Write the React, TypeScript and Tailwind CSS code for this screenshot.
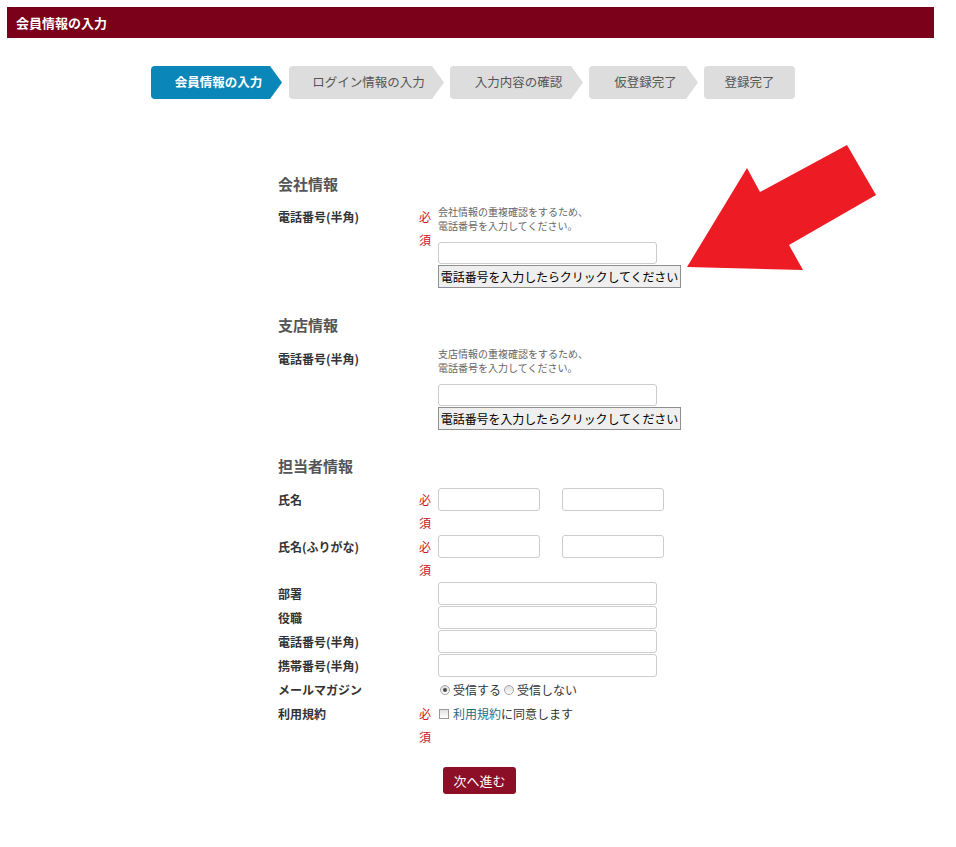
import React from "react";

const steps = [
  { label: "会員情報の入力", w: 131, active: true, arrow: true },
  { label: "ログイン情報の入力", w: 155, active: false, arrow: true },
  { label: "入力内容の確認", w: 133, active: false, arrow: true },
  { label: "仮登録完了", w: 109, active: false, arrow: true },
  { label: "登録完了", w: 91, active: false, arrow: false },
];

function Req() {
  return (
    <div className="w-[19px] shrink-0 flex flex-col text-[12px] leading-[23px] text-[#c8161d]">
      <span>必</span>
      <span>須</span>
    </div>
  );
}

function NoReq() {
  return <div className="w-[19px] shrink-0" />;
}

function Label({ children }: { children: React.ReactNode }) {
  return (
    <div className="w-[141px] shrink-0 text-[12px] font-bold leading-[23px] text-[#333]">
      {children}
    </div>
  );
}

function TextInput({ w }: { w: number }) {
  return (
    <div
      className={
        (w === 102 ? "w-[102px]" : "w-[219px]") +
        " h-[23px] border border-[#cccccc] rounded-[3px] bg-white"
      }
    />
  );
}

function Radio({ checked }: { checked: boolean }) {
  return (
    <span className="inline-flex w-[10px] h-[10px] rounded-full border border-[#a6a6a6] bg-gradient-to-b from-[#dcdcdc] to-[#ffffff] items-center justify-center">
      {checked && <span className="w-[4px] h-[4px] rounded-full bg-[#4a4a4a]" />}
    </span>
  );
}

function PhoneBlock({ note1 }: { note1: string }) {
  return (
    <div className="flex flex-col">
      <div className="text-[10px] leading-[14px] text-[#666]">
        {note1}
        <br />
        電話番号を入力してください。
      </div>
      <div className="mt-[9px] w-[219px] h-[22px] border border-[#cccccc] rounded-[3px] bg-white" />
      <button className="mt-[1px] w-[243px] h-[23px] border border-[#8f8f8f] bg-[#efefef] text-[12px] tracking-[-0.1px] leading-[21px] text-black px-0 text-center whitespace-nowrap">
        電話番号を入力したらクリックしてください
      </button>
    </div>
  );
}

export default function App() {
  return (
    <div className="relative min-h-[847px] bg-white pt-[7px] font-['Noto_Sans_CJK_JP','Noto_Sans',sans-serif] text-[#333]">
      {/* Title bar */}
      <div className="ml-[7px] w-[927px] h-[31px] bg-[#7b0019] flex items-center pl-[9px]">
        <span className="text-white font-bold text-[13px] leading-none">会員情報の入力</span>
      </div>

      {/* Steps */}
      <div className="mt-[28px] flex pl-[151px] gap-[6px]">
        {steps.map((s, i) => (
          <div
            key={i}
            style={{ width: s.w }}
            className={
              "h-[33px] rounded-[4px] flex items-center justify-center text-[12.5px] " +
              (s.active ? "bg-[#0a86b9] text-white font-bold " : "bg-[#dddddd] text-[#555] ") +
              (s.arrow
                ? "[clip-path:polygon(0_0,calc(100%_-_12px)_0,100%_50%,calc(100%_-_12px)_100%,0_100%)] "
                : "") +
              (i === 0 ? "mr-[1px]" : "")
            }
          >
            <span className={s.arrow ? "pl-[4px]" : ""}>{s.label}</span>
          </div>
        ))}
      </div>

      {/* Form */}
      <div className="mx-auto w-[400px] mt-[75px]">
        {/* 会社情報 */}
        <div className="text-[15px] font-bold leading-[20px] text-[#555]">会社情報</div>
        <div className="mt-[11px] flex">
          <Label>電話番号(半角)</Label>
          <Req />
          <PhoneBlock note1="会社情報の重複確認をするため、" />
        </div>

        {/* 支店情報 */}
        <div className="mt-[27px] text-[15px] font-bold leading-[20px] text-[#555]">支店情報</div>
        <div className="mt-[12px] flex">
          <Label>電話番号(半角)</Label>
          <NoReq />
          <PhoneBlock note1="支店情報の重複確認をするため、" />
        </div>

        {/* 担当者情報 */}
        <div className="mt-[26px] text-[15px] font-bold leading-[20px] text-[#555]">担当者情報</div>
        <div className="mt-[12px] flex flex-col">
          <div className="flex h-[47px]">
            <Label>氏名</Label>
            <Req />
            <div className="flex gap-[22px]">
              <TextInput w={102} />
              <TextInput w={102} />
            </div>
          </div>
          <div className="flex h-[47px]">
            <Label>氏名(ふりがな)</Label>
            <Req />
            <div className="flex gap-[22px]">
              <TextInput w={102} />
              <TextInput w={102} />
            </div>
          </div>
          {["部署", "役職", "電話番号(半角)", "携帯番号(半角)"].map((l) => (
            <div key={l} className="flex h-[24px]">
              <Label>{l}</Label>
              <NoReq />
              <TextInput w={219} />
            </div>
          ))}
          <div className="flex h-[24px] items-start">
            <Label>メールマガジン</Label>
            <NoReq />
            <div className="flex items-center h-[23px] text-[12px] text-[#333] pl-[2px]">
              <Radio checked={true} />
              <span className="ml-[3px]">受信する</span>
              <span className="ml-[3px] inline-flex">
                <Radio checked={false} />
              </span>
              <span className="ml-[3px]">受信しない</span>
            </div>
          </div>
          <div className="flex h-[47px]">
            <Label>利用規約</Label>
            <Req />
            <div className="flex items-center h-[23px] text-[12px] pl-[1px]">
              <span className="w-[10px] h-[10px] border border-[#9a9a9a] bg-gradient-to-b from-[#e2e2e2] to-[#ffffff]" />
              <span className="ml-[4px] text-[#1f6a8a]">利用規約</span>
              <span className="text-[#333]">に同意します</span>
            </div>
          </div>
        </div>

        <div className="mt-[18px] flex justify-center pl-[3px]">
          <button className="w-[73px] h-[27px] rounded-[3px] bg-[#8d0f27] text-white text-[13px] leading-none">
            次へ進む
          </button>
        </div>
      </div>

      {/* Red arrow annotation */}
      <svg
        className="absolute left-[680px] top-[140px] pointer-events-none"
        width="200"
        height="135"
        viewBox="0 0 200 135"
      >
        <polygon
          points="7,127 67,28 80,52 167,5 196,55 109,105 123,130"
          fill="#ed1c24"
        />
      </svg>
    </div>
  );
}
